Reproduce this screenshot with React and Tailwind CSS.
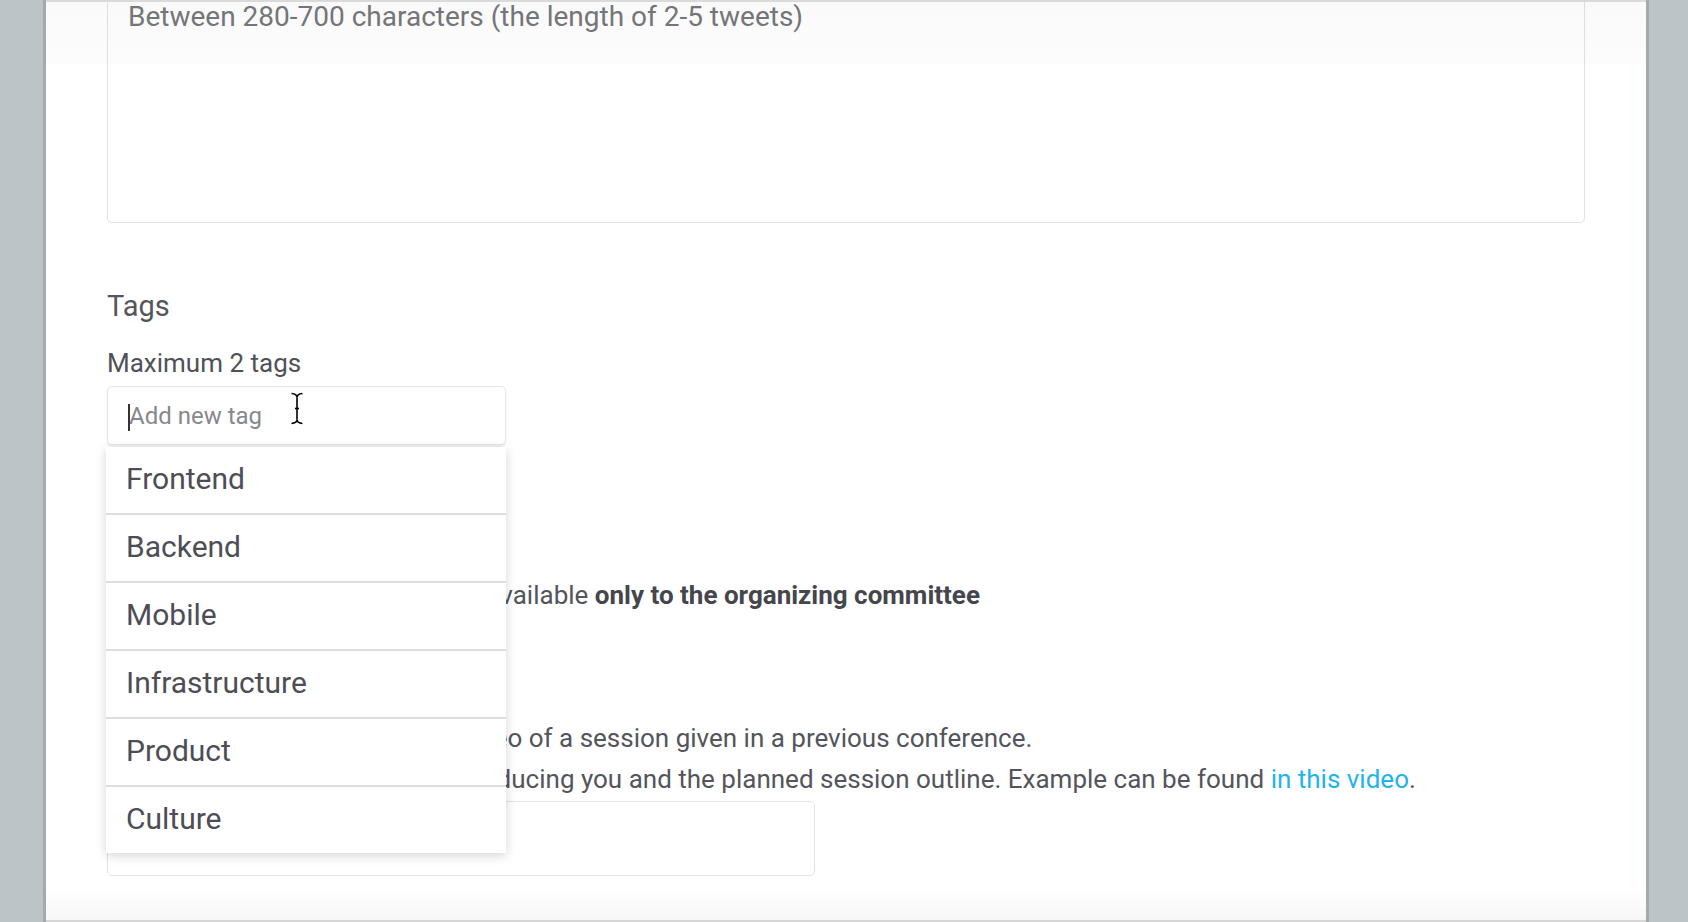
import React from 'react';

const tags = ['Frontend', 'Backend', 'Mobile', 'Infrastructure', 'Product', 'Culture'];

function IBeam() {
  return (
    <svg width="14" height="33" viewBox="0 0 14 33" fill="none" stroke="#000" strokeWidth="1.6">
      <path d="M1.5 1.5 Q7 2 7 5.5 Q7 2 12.5 1.5" />
      <path d="M7 5.5 V27.5" />
      <path d="M1.5 31.5 Q7 31 7 27.5 Q7 31 12.5 31.5" />
      <path d="M5 16.5 H9" />
    </svg>
  );
}

export default function App() {
  return (
    <div className="flex h-[922px] w-full overflow-hidden bg-[#bcc4c8] font-[family-name:Roboto,sans-serif]">
      {/* left gutter */}
      <div className="w-[46px] shrink-0 bg-[#bcc4c8] shadow-[inset_-3px_0_0_#a2aaae]" />

      <main className="relative flex-1 overflow-hidden bg-white px-[61px] text-[#53555c]">
        {/* abstract field, scrolled partly out of view */}
        <div className="-mt-[25px]">
          <textarea
            className="block h-[248px] w-full resize-none rounded-[5px] border border-[#e2e2e2] bg-white px-[20px] pt-[20px] text-[28px] leading-[42px] text-[#53555c] outline-none placeholder:text-[#76777b]"
            placeholder="Between 280-700 characters (the length of 2-5 tweets)"
          />
        </div>

        {/* Tags */}
        <h3 className="mt-[66px] text-[29px] leading-[34px] text-[#55565b]">Tags</h3>
        <p className="mt-[21px] text-[26px] leading-[39px] text-[#505157]">Maximum 2 tags</p>
        <div className="relative z-10 mt-[3px] w-[399px]">
          <input
            className="block h-[59px] w-full rounded-[5px] border border-[#e6e6e6] bg-white pl-[21px] text-[24px] text-[#53555c] shadow-[0_2px_2px_rgba(0,0,0,0.07)] outline-none placeholder:text-[#87888c]"
            placeholder="Add new tag"
          />
          <span className="absolute left-[21px] top-[18px] h-[27px] w-[2px] bg-[#333]" />
          <span className="absolute left-[183px] top-[6px]">
            <IBeam />
          </span>

          {/* suggestions */}
          <ul className="absolute left-[-1px] top-[61px] w-[400px] divide-y-2 divide-[#dedede] bg-white shadow-[0_3px_10px_rgba(0,0,0,0.16)]">
            {tags.map((t) => (
              <li key={t} className="box-content flex h-[62px] items-center pb-[4px] pl-[20px] text-[30px] text-[#4d4e55]">
                {t}
              </li>
            ))}
          </ul>
        </div>

        {/* Outline */}
        <h3 className="mt-[68px] text-[29px] leading-[34px] text-[#55565b]">Outline</h3>
        <p className="mt-[28px] text-[26px] leading-[41px]">
          Session outline – it will be made available{' '}
          <strong className="font-bold text-[#45464c]">only to the organizing committee</strong>
        </p>

        {/* Video */}
        <h3 className="mt-[40px] text-[29px] leading-[34px] text-[#55565b]">Video</h3>
        <p className="mt-[28px] text-[26px] leading-[41px]">
          Please provide a link to a prior video of a session given in a previous conference.
          <br />
          If you don't have one, a video introducing you and the planned session outline. Example can be found{' '}
          <a href="#" className="text-[#1fb4ea]">in this video</a>.
        </p>
        <input className="mt-px block h-[75px] w-[708px] rounded-[5px] border border-[#e3e3e3] bg-white outline-none" />

        {/* edge shading */}
        <div className="pointer-events-none absolute inset-x-0 top-0 h-[64px] border-t-2 border-[#dadada] bg-linear-to-b from-black/[0.02] to-black/[0.012]" />
        <div className="pointer-events-none absolute inset-x-0 bottom-0 h-[34px] border-b-2 border-[#d6d6d6] bg-linear-to-b from-white/0 to-[#f7f7f7]" />
      </main>

      {/* right gutter */}
      <div className="w-[42px] shrink-0 bg-[#bcc4c8] shadow-[inset_3px_0_0_#a2aaae]" />
    </div>
  );
}
